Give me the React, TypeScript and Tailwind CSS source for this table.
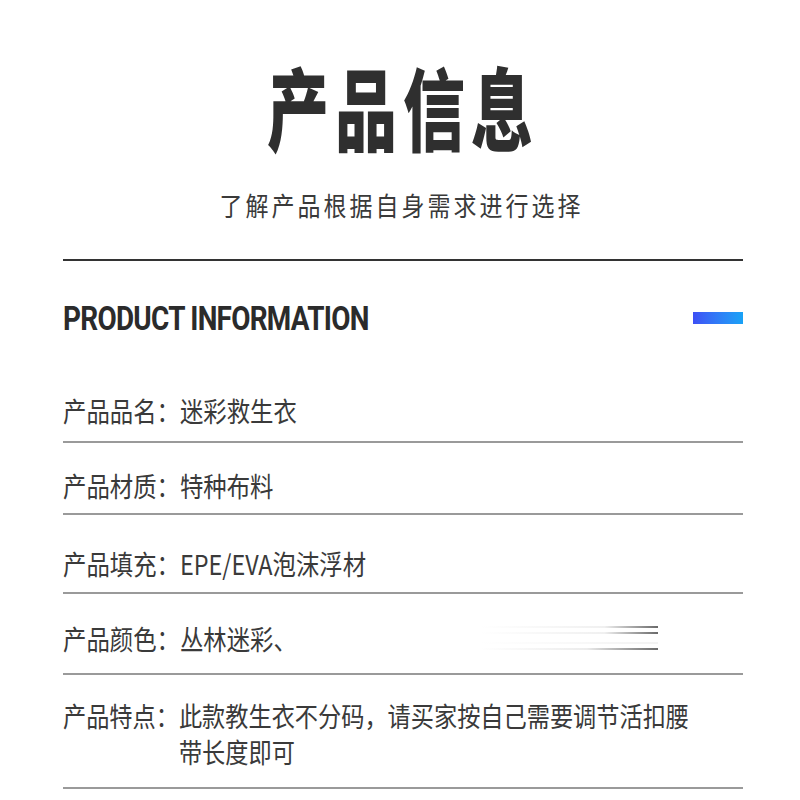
export default function App() {
  const cjk = "font-['Noto_Sans_CJK_SC',sans-serif]";

  return (
    <div className={`w-[800px] h-[800px] bg-white overflow-hidden flex flex-col ${cjk}`}>
      {/* Heading */}
      <div className="pt-[74px] flex justify-center">
        <h1 className="text-[62px] leading-[62px] font-black tracking-[6px] pl-[6px] text-[#2f2f2f] scale-y-[1.45]">
          产品信息
        </h1>
      </div>
      <div className="mt-[57px] flex justify-center">
        <p className="text-[23px] leading-[24px] tracking-[3px] pl-[3px] text-[#3a3a3a] scale-y-[1.15]">
          了解产品根据自身需求进行选择
        </p>
      </div>

      <div className="ml-[63px] w-[680px] flex flex-col">
        <div className="mt-[42px] h-[2px] bg-[#333]"></div>

        {/* Section title */}
        <div className="h-[114px] flex items-center justify-between">
          <span className="inline-block origin-left scale-x-[0.9] scale-y-[1.05] font-['Roboto',sans-serif] font-bold text-[31px] leading-none tracking-[-0.8px] text-[#2b2b2b] whitespace-nowrap">
            PRODUCT INFORMATION
          </span>
          <div className="w-[50px] h-[12px] bg-linear-to-r from-[#3d4ff5] to-[#18a2f6]"></div>
        </div>

        {/* Rows */}
        <div className="pt-[22px] pb-[18px] border-b-2 border-[#9a9a9a]">
          <Line label="产品品名：" value="迷彩救生衣" />
        </div>
        <div className="pt-[29px] pb-[15px] border-b-2 border-[#9a9a9a]">
          <Line label="产品材质：" value="特种布料" />
        </div>
        <div className="pt-[35px] pb-[16px] border-b-2 border-[#9a9a9a]">
          <Line label="产品填充：" value="EPE/EVA泡沫浮材" />
        </div>
        <div className="pt-[31px] pb-[22px] border-b-2 border-[#9a9a9a] flex items-center">
          <div className="w-[417px]">
            <Line label="产品颜色：" value="丛林迷彩、" />
          </div>
          {/* blurred remainder of the colour list */}
          <div className="w-[178px] flex flex-col">
            <div className="h-[2px] bg-linear-to-r from-transparent via-[#f0f0f0] via-70% to-[#6a6a6a]"></div>
            <div className="mt-[4px] h-[2px] bg-linear-to-r from-transparent via-[#f0f0f0] via-70% to-[#6a6a6a]"></div>
            <div className="mt-[8px] h-[2px] bg-linear-to-r from-transparent to-[#f3f3f3]"></div>
            <div className="mt-[4px] h-[2px] bg-linear-to-r from-transparent via-[#ececec] via-60% to-[#6a6a6a]"></div>
          </div>
        </div>
        <div className="pt-[28px] pb-[22px] border-b-2 border-[#9a9a9a]">
          <div className="flex text-[23.2px] leading-[31px] text-[#3a3a3a] scale-y-[1.18]">
            <span className="shrink-0">产品特点：</span>
            <span>
              此款教生衣不分码，请买家按自己需要调节活扣腰
              <br />
              带长度即可
            </span>
          </div>
        </div>
      </div>
    </div>
  );
}

function Line({ label, value }: { label: string; value: string }) {
  return (
    <div className="text-[23.4px] leading-[26px] text-[#3a3a3a] scale-y-[1.18] whitespace-nowrap">
      {label}
      {value}
    </div>
  );
}
